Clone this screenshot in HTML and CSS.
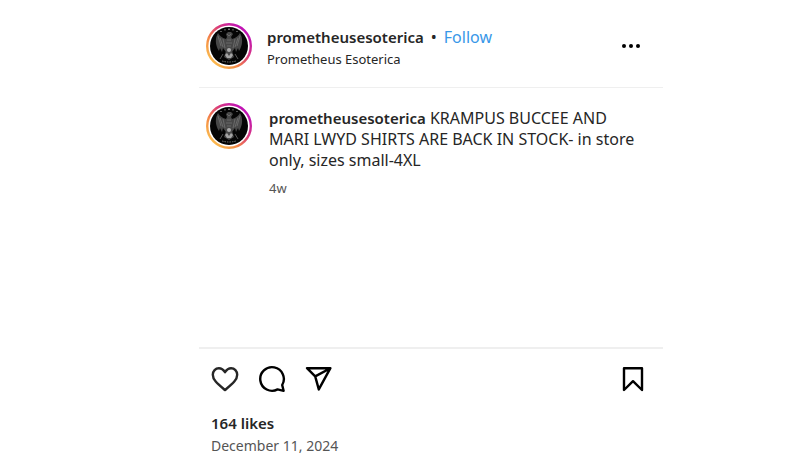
FILE: index.html
```html
<!DOCTYPE html>
<html lang="en">
<head>
<meta charset="UTF-8">
<meta name="viewport" content="width=device-width, initial-scale=1.0">
<title>Prometheus Esoterica</title>
<link rel="stylesheet" href="styles.css">
</head>
<body>

<svg class="defs" aria-hidden="true">
  <defs>
    <linearGradient id="ring" x1="0" y1="1" x2="1" y2="0">
      <stop offset="0.1" stop-color="#fbc050"/>
      <stop offset="0.35" stop-color="#f58a45"/>
      <stop offset="0.6" stop-color="#d93a7c"/>
      <stop offset="0.85" stop-color="#c013b4"/>
    </linearGradient>
    <symbol id="avatar" viewBox="0 0 46 46">
      <circle cx="23" cy="23" r="21.8" fill="#fff" stroke="url(#ring)" stroke-width="2.4"/>
      <circle cx="23" cy="23" r="19" fill="#050505"/>
      <g fill="#484848">
        <path d="M20 16C16 15 13 12 12 10C9 15 9 22 13 28L14 25L16 29L17 25L20 29Z"/>
        <path d="M26 16C30 15 33 12 34 10C37 15 37 22 33 28L32 25L30 29L29 25L26 29Z"/>
        <path d="M20 11L22 9H25L27 11L25 14L27 18L26 28L28 34L23 37L18 34L20 28L19 18L21 14Z"/>
      </g>
      <g fill="none" stroke="#787878" stroke-width="0.7">
        <path d="M12 13L15 23M14 15L17 24M17 16L19 25M34 13L31 23M32 15L29 24M29 16L27 25"/>
        <path d="M21 11L23 13L25 11M21 17H25M20 20H26M21 23H25M17 31L14 36M29 31L32 36"/>
      </g>
      <circle cx="23" cy="27" r="2" fill="#aaa"/>
      <path d="M19 32L21 30L23 33L25 30L27 32L25 35H21Z" fill="#a5a5a5"/>
      <g fill="#bbb">
        <circle cx="15" cy="8.5" r="0.6"/><circle cx="19" cy="6.8" r="0.6"/><circle cx="23" cy="6.3" r="0.8"/>
        <circle cx="27" cy="6.8" r="0.6"/><circle cx="31" cy="8.5" r="0.6"/>
      </g>
      <path d="M16 38Q23 40 30 38" fill="none" stroke="#777" stroke-dasharray="1.5 1"/>
    </symbol>
  </defs>
</svg>

<article class="post">
  <header class="post-header">
    <svg class="avatar"><use href="#avatar"/></svg>
    <div class="author">
      <div class="author-line">
        <a href="#" class="username">prometheusesoterica</a>
        <span class="dot">•</span>
        <button type="button" class="follow">Follow</button>
      </div>
      <a href="#" class="location">Prometheus Esoterica</a>
    </div>
    <button type="button" class="icon-button" aria-label="More options">
      <svg width="20" height="24" viewBox="0 0 20 24">
        <circle cx="3" cy="12" r="2"/><circle cx="10" cy="12" r="2"/><circle cx="17" cy="12" r="2"/>
      </svg>
    </button>
  </header>

  <section class="comments">
    <svg class="avatar"><use href="#avatar"/></svg>
    <div class="comment">
      <p class="caption"><a href="#" class="username">prometheusesoterica</a> <span>KRAMPUS BUCCEE AND MARI LWYD SHIRTS ARE BACK IN STOCK- in store only, sizes small-4XL</span></p>
      <time class="age">4w</time>
    </div>
  </section>

  <footer class="post-footer">
    <div class="actions">
      <button type="button" class="icon-button" aria-label="Like">
        <svg class="line-icon like" width="28" height="28" viewBox="0 0 28 28">
          <path d="M14 25C12.5 23.7 7.5 19.8 4.7 16.5C2.8 14.4 1.8 12.4 1.8 9.8C1.8 6 4.5 3.2 7.9 3.2C10.6 3.2 12.4 4.6 14 7.2C15.6 4.6 17.4 3.2 20.1 3.2C23.5 3.2 26.2 6 26.2 9.8C26.2 12.4 25.2 14.4 23.3 16.5C20.5 19.8 15.5 23.7 14 25Z"/>
        </svg>
      </button>
      <button type="button" class="icon-button" aria-label="Comment">
        <svg class="line-icon" width="28" height="28" viewBox="0 0 28 28">
          <path d="M24.2 20A11.8 11.8 0 1 0 19.6 24.4L25.6 25.8Z"/>
        </svg>
      </button>
      <button type="button" class="icon-button" aria-label="Share">
        <svg class="line-icon" width="28" height="28" viewBox="0 0 28 28">
          <path d="M2 3.2H25.4L13.8 24.4L10.2 11.4ZM10.2 11.4L25.4 3.2"/>
        </svg>
      </button>
      <button type="button" class="icon-button save" aria-label="Save">
        <svg class="line-icon" width="22" height="28" viewBox="0 0 22 28">
          <path d="M2 3.2H20V25L11 16.2L2 25Z"/>
        </svg>
      </button>
    </div>
    <div class="likes">164 likes</div>
    <time class="date" datetime="2024-12-11">December 11, 2024</time>
  </footer>
</article>

</body>
</html>
```
FILE: styles.css
```css
* {
  box-sizing: border-box;
}

body {
  margin: 0;
  padding: 0 149px 0 199px;
  background: #fff;
  color: #262626;
  font-family: "Segoe UI", "Noto Sans", sans-serif;
  font-size: 16px;
  line-height: 21px;
}

a {
  color: inherit;
  text-decoration: none;
}

button {
  padding: 0;
  border: 0;
  background: none;
  font: inherit;
  cursor: pointer;
}

.defs {
  position: absolute;
  width: 0;
  height: 0;
}

.avatar {
  flex: none;
  width: 46px;
  height: 46px;
}

.post-header {
  display: flex;
  align-items: center;
  gap: 15px;
  padding: 22px 22px 17px 7px;
  border-bottom: 1px solid #efefef;
}

.author {
  flex: 1;
  padding-top: 5px;
}

.author-line {
  display: flex;
  gap: 7px;
}

.username {
  font-size: 15px;
  font-weight: 600;
}

.follow {
  color: #3897e8;
}

.location {
  display: block;
  font-size: 13px;
  line-height: 22px;
}

.icon-button {
  display: flex;
  color: #000;
}

.line-icon {
  fill: none;
  stroke: currentColor;
  stroke-width: 2.4;
  stroke-linejoin: round;
}

.like {
  color: #262626;
}

.comments {
  display: flex;
  gap: 17px;
  min-height: 261px;
  padding: 15px 22px 15px 7px;
  border-bottom: 2px solid #efefef;
}

.comment {
  flex: 1;
  padding-top: 5px;
}

.caption {
  margin: 0 0 7px;
}

.age {
  display: block;
  color: #555;
  font-size: 13px;
}

.post-footer {
  padding: 16px 19px 16px 12px;
}

.actions {
  display: flex;
  gap: 19px;
  margin-bottom: 20px;
}

.save {
  margin-left: auto;
}

.likes {
  font-size: 15px;
  font-weight: 600;
}

.date {
  display: block;
  color: #555;
  font-size: 14px;
  line-height: 24px;
}
```
